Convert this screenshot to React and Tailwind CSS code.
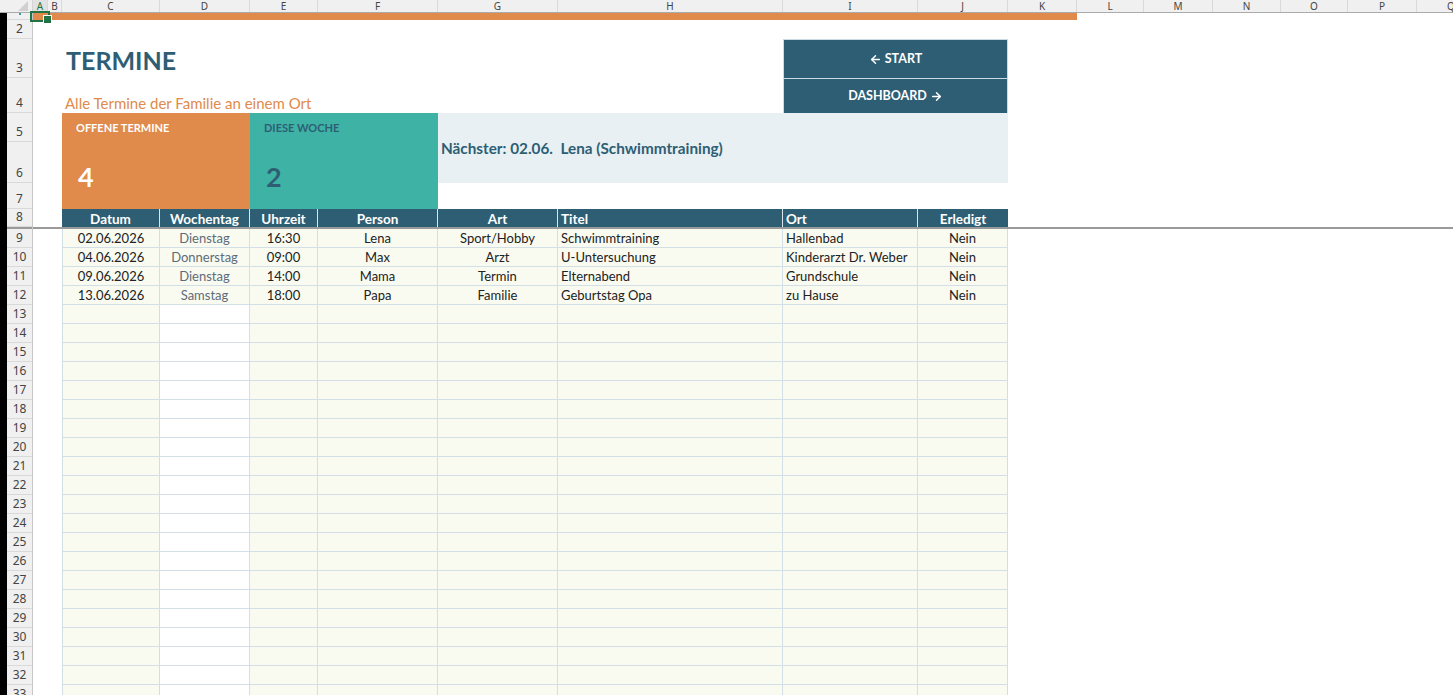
import React from 'react';
import { ArrowLeft, ArrowRight } from 'lucide-react';

const colLetters = [
  ['A', 'w-[15px]'], ['B', 'w-[14px]'], ['C', 'w-[98px]'], ['D', 'w-[90px]'], ['E', 'w-[68px]'],
  ['F', 'w-[120px]'], ['G', 'w-[120px]'], ['H', 'w-[225px]'], ['I', 'w-[135px]'], ['J', 'w-[90px]'],
  ['K', 'w-[69px]'], ['L', 'w-[67px]'], ['M', 'w-[69px]'], ['N', 'w-[68px]'], ['O', 'w-[67px]'],
  ['P', 'w-[69px]'], ['Q', 'w-[69px]'],
];

const rhRows = [
  { n: '2', h: 'h-[19px]' }, { n: '3', h: 'h-[39px]' }, { n: '4', h: 'h-[35px]' },
  { n: '5', h: 'h-[29px]' }, { n: '6', h: 'h-[41px]' }, { n: '7', h: 'h-[26px]' }, { n: '8', h: 'h-[18px]' },
];

const tcols = [
  { w: 'w-[98px]', al: 'justify-center', label: 'Datum' },
  { w: 'w-[90px]', al: 'justify-center', label: 'Wochentag' },
  { w: 'w-[68px]', al: 'justify-center', label: 'Uhrzeit' },
  { w: 'w-[120px]', al: 'justify-center', label: 'Person' },
  { w: 'w-[120px]', al: 'justify-center', label: 'Art' },
  { w: 'w-[225px]', al: 'justify-start pl-[3px]', label: 'Titel' },
  { w: 'w-[135px]', al: 'justify-start pl-[3px]', label: 'Ort' },
  { w: 'w-[90px]', al: 'justify-center', label: 'Erledigt' },
];

const data = [
  ['02.06.2026', 'Dienstag', '16:30', 'Lena', 'Sport/Hobby', 'Schwimmtraining', 'Hallenbad', 'Nein'],
  ['04.06.2026', 'Donnerstag', '09:00', 'Max', 'Arzt', 'U-Untersuchung', 'Kinderarzt Dr. Weber', 'Nein'],
  ['09.06.2026', 'Dienstag', '14:00', 'Mama', 'Termin', 'Elternabend', 'Grundschule', 'Nein'],
  ['13.06.2026', 'Samstag', '18:00', 'Papa', 'Familie', 'Geburtstag Opa', 'zu Hause', 'Nein'],
];

const dataRowNums = Array.from({ length: 25 }, (_, i) => i + 9);

export default function App() {
  return (
    <div className="w-[1453px] h-[695px] overflow-hidden bg-white flex flex-col font-['Lato',sans-serif] text-[#262626]">
      {/* column header bar */}
      <div className="flex h-[13px] shrink-0 bg-[#f0f0f0] border-b border-[#ababab] font-['Noto_Sans',sans-serif]">
        <div className="w-[33px] shrink-0 border-r border-[#d4d4d4] flex justify-end items-end pr-[4px] pb-[1px]">
          <svg width="10" height="10" viewBox="0 0 10 10">
            <polygon points="10,0 10,10 0,10" fill="#d0d0d0" />
          </svg>
        </div>
        {colLetters.map(([l, w]) => (
          <div
            key={l}
            className={`${w} shrink-0 border-r border-[#d9d9d9] flex justify-center items-start text-[10px] leading-[12px] ${l === 'A' ? 'bg-[#e2e2e2] text-[#217346]' : 'text-[#444]'}`}
          >
            {l}
          </div>
        ))}
      </div>

      <div className="flex flex-1 min-h-0">
        <div className="w-[7px] shrink-0 bg-black" />
        {/* row headers */}
        <div className="w-[26px] shrink-0 bg-[#f0f0f0] border-r border-[#c6c6c6] flex flex-col text-[#444] text-[12px] font-['Noto_Sans',sans-serif]">
          <div className="h-[7px] shrink-0 border-b border-[#d9d9d9] flex justify-center">
            <div className="w-[2px] h-[2px] bg-[#3aa0a0]" />
          </div>
          {rhRows.map((r) => (
            <div key={r.n} className={`${r.h} shrink-0 border-b border-[#d9d9d9] flex items-end justify-center leading-[18px]`}>
              {r.n}
            </div>
          ))}
          <div className="h-[2px] shrink-0 bg-[#9a9a9a]" />
          {dataRowNums.map((n) => (
            <div key={n} className="h-[19px] shrink-0 border-b border-[#d9d9d9] flex items-center justify-center leading-[18px]">
              {n}
            </div>
          ))}
        </div>

        {/* sheet */}
        <div className="flex-1 flex flex-col relative">
          {/* row 1 */}
          <div className="h-[7px] shrink-0 flex">
            <div className="w-[1044px] h-[7px] bg-[#e08a4b]" />
          </div>
          {/* selection */}
          <div className="absolute left-[-3px] top-[-2px] w-[20px] h-[11px] border-2 border-[#217346]" />
          <div className="absolute left-[10px] top-[2px] w-[9px] h-[9px] bg-[#217346] border border-white" />

          {/* row 2 */}
          <div className="h-[19px] shrink-0" />

          {/* rows 3-4 */}
          <div className="h-[74px] shrink-0 flex pl-[29px]">
            <div className="w-[721px] flex flex-col">
              <div className="h-[39px] pt-[9px] pl-[4px] text-[25px] leading-[25px] font-bold text-[#2e5e74]">TERMINE</div>
              <div className="h-[35px] pt-[17px] pl-[3px] text-[15px] leading-[16px] text-[#e08a4b]">
                Alle Termine der Familie an einem Ort
              </div>
            </div>
            <div className="w-[225px] flex flex-col">
              <div className="h-[39px] bg-[#2e5e74] border border-b-0 border-[#c9dae2] flex items-center justify-center gap-[3px] text-white font-bold text-[12.5px]">
                <ArrowLeft size={13} strokeWidth={2.75} />
                <span>START</span>
              </div>
              <div className="h-[35px] bg-[#2e5e74] border-x border-t border-[#c9dae2] flex items-center justify-center gap-[3px] text-white font-bold text-[12.5px]">
                <span>DASHBOARD</span>
                <ArrowRight size={13} strokeWidth={2.75} />
              </div>
            </div>
          </div>

          {/* rows 5-7 cards */}
          <div className="h-[96px] shrink-0 flex pl-[29px]">
            <div className="w-[188px] bg-[#e08a4b] flex flex-col pl-[14px] pt-[8px]">
              <div className="text-[11px] leading-[14px] font-bold text-white">OFFENE TERMINE</div>
              <div className="mt-[28px] pl-[2px] text-[27px] leading-[27px] font-bold text-white">4</div>
            </div>
            <div className="w-[188px] bg-[#3eb2a5] flex flex-col pl-[14px] pt-[8px]">
              <div className="text-[11px] leading-[14px] font-bold text-[#2e5e74]">DIESE WOCHE</div>
              <div className="mt-[28px] pl-[2px] text-[27px] leading-[27px] font-bold text-[#2e5e74]">2</div>
            </div>
            <div className="w-[570px] h-[70px] bg-[#e8f0f3] flex items-center pl-[3px] text-[15.3px] font-bold text-[#2e5e74] whitespace-pre">
              {'Nächster: 02.06.  Lena (Schwimmtraining)'}
            </div>
          </div>

          {/* row 8 header */}
          <div className="h-[18px] shrink-0 flex pl-[29px]">
            {tcols.map((c, i) => (
              <div
                key={c.label}
                className={`${c.w} shrink-0 h-full bg-[#2e5e74] flex items-center pt-[1px] ${c.al} text-white font-bold text-[13.5px] leading-[16px] ${i < 7 ? 'border-r border-[#dbe5ea]' : ''}`}
              >
                {c.label}
              </div>
            ))}
          </div>

          {/* freeze line */}
          <div className="h-[2px] shrink-0 bg-[#9a9a9a]" />

          {/* data rows */}
          {dataRowNums.map((n, ri) => {
            const row = data[ri];
            return (
              <div key={n} className="h-[19px] shrink-0 flex pl-[29px]">
                {tcols.map((c, ci) => {
                  const bg = !row && ci === 1 ? 'bg-white' : 'bg-[#f9fbf1]';
                  const color = ci === 1 ? 'text-[#5f6b78]' : 'text-[#222]';
                  return (
                    <div
                      key={ci}
                      className={`${c.w} shrink-0 h-full ${bg} ${color} border-b border-r border-[#d3dfe6] ${ci === 0 ? 'border-l' : ''} flex items-center ${c.al} text-[13px] leading-[16px] whitespace-nowrap overflow-hidden`}
                    >
                      {row ? row[ci] : ''}
                    </div>
                  );
                })}
              </div>
            );
          })}
        </div>
      </div>
    </div>
  );
}
